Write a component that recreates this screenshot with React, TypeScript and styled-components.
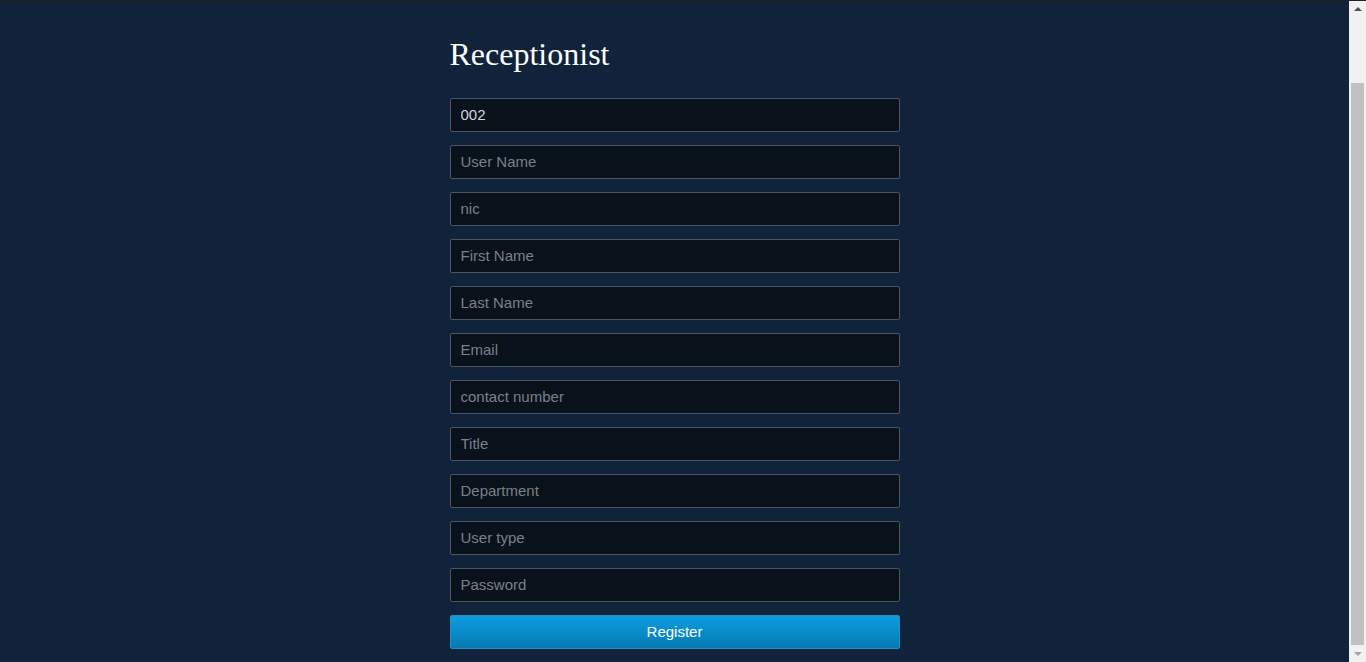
import React, { useLayoutEffect, useEffect } from "react";
import styled, { createGlobalStyle } from "styled-components";

const Global = createGlobalStyle`
  html {
    background: #10233a;
    scrollbar-width: none;
  }
  html::-webkit-scrollbar { display: none; }
  body {
    margin: 0;
    background: #10233a;
    font-family: "Liberation Sans", Arial, sans-serif;
  }
  * { box-sizing: border-box; }
  input::placeholder { color: #7b8087; opacity: 1; }
`;

const TopEdge = styled.div`
  position: fixed;
  top: 0;
  left: 0;
  right: 0;
  height: 1px;
  background: #1f2125;
  z-index: 10;
`;

const ScrollBar = styled.div`
  position: fixed;
  top: 0;
  right: 0;
  bottom: 0;
  width: 17px;
  background: #f1f1f1;
  display: flex;
  flex-direction: column;
  z-index: 5;
`;

const Arrow = styled.div<{ $down?: boolean; $disabled?: boolean }>`
  height: 17px;
  flex: none;
  display: flex;
  align-items: center;
  justify-content: center;
  &::before {
    content: "";
    width: 0;
    height: 0;
    border-left: 4px solid transparent;
    border-right: 4px solid transparent;
    ${(p) =>
      p.$down
        ? `border-top: 4px solid ${p.$disabled ? "#a3a3a3" : "#505050"};`
        : `border-bottom: 4px solid ${p.$disabled ? "#a3a3a3" : "#505050"};`}
  }
`;

const Track = styled.div`
  flex: 1;
  display: flex;
  flex-direction: column;
  padding: 66px 2px 0;
`;

const Thumb = styled.div`
  flex: 1;
  background: #c1c1c1;
`;

const Page = styled.main`
  display: flex;
  justify-content: center;
  padding: 114px 17px 13px 0;
`;

const Form = styled.form`
  width: 450px;
  display: flex;
  flex-direction: column;
  gap: 13px;
`;

const Title = styled.h1`
  margin: 0 0 12px;
  font-family: "Liberation Serif", "Times New Roman", serif;
  font-weight: normal;
  font-size: 32px;
  line-height: 36px;
  padding-bottom: 1px;
  color: #ffffff;
`;

const Field = styled.input`
  width: 100%;
  height: 34px;
  margin: 0;
  padding: 0 10px 2px;
  background: #09111b;
  border: 1px solid #4b5561;
  border-radius: 2px;
  color: #d4d6d8;
  font-family: "Liberation Sans", Arial, sans-serif;
  font-size: 15px;
  outline: none;
`;

const Button = styled.button`
  width: 100%;
  height: 34px;
  margin: 0;
  padding: 0 0 2px;
  border: 1px solid #1d8fcb;
  border-radius: 2px;
  background: linear-gradient(to bottom, #0e9ddc 0%, #0a8ccb 50%, #0479b1 100%);
  color: #ffffff;
  font-family: "Liberation Sans", Arial, sans-serif;
  font-size: 15px;
  cursor: pointer;
`;

const fields: { placeholder: string; value?: string }[] = [
  { placeholder: "ID", value: "002" },
  { placeholder: "User Name" },
  { placeholder: "nic" },
  { placeholder: "First Name" },
  { placeholder: "Last Name" },
  { placeholder: "Email" },
  { placeholder: "contact number" },
  { placeholder: "Title" },
  { placeholder: "Department" },
  { placeholder: "User type" },
  { placeholder: "Password" },
];

export default function App() {
  useLayoutEffect(() => {
    window.scrollTo(0, 78);
  }, []);
  useEffect(() => {
    window.scrollTo(0, 78);
    const t = setTimeout(() => window.scrollTo(0, 78), 0);
    return () => clearTimeout(t);
  }, []);
  return (
    <>
      <Global />
      <TopEdge />
      <ScrollBar>
        <Arrow />
        <Track>
          <Thumb />
        </Track>
        <Arrow $down $disabled />
      </ScrollBar>
      <Page>
        <Form onSubmit={(e) => e.preventDefault()}>
          <Title>Receptionist</Title>
          {fields.map((f) => (
            <Field
              key={f.placeholder}
              type={f.placeholder === "Password" ? "password" : "text"}
              placeholder={f.placeholder}
              defaultValue={f.value}
            />
          ))}
          <Button type="submit">Register</Button>
        </Form>
      </Page>
    </>
  );
}
